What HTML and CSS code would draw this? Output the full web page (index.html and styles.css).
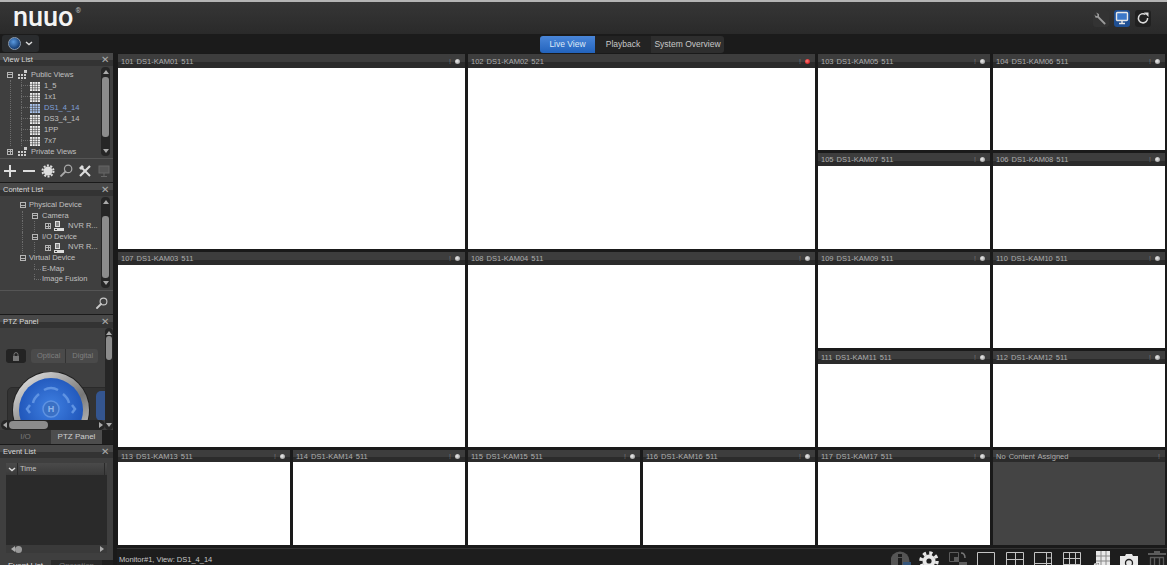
FILE: index.html
```html
<!DOCTYPE html>
<html lang="en">
<head>
<meta charset="utf-8">
<title>NUUO</title>
<link rel="stylesheet" href="styles.css">
</head>
<body>
<svg class="defs" width="0" height="0">
  <symbol id="grid" viewBox="0 0 10 10"><path fill="currentColor" d="M0 1h10v9H0z"/><path stroke="#444" stroke-width=".6" d="M0 3.300h10M0 5.600h10M0 7.800h10M2.500 1v9M5 1v9M7.500 1v9"/></symbol>
  <symbol id="views" viewBox="0 0 10 10"><path fill="#ccc" d="M0 4h2v2H0zM3 4h2v2H3zM0 7h2v2H0zM3 7h2v2H3zM6 7h2v2H6zM6 4h2v2H6zM6 0h3v3H6z"/></symbol>
  <symbol id="nvr" viewBox="0 0 10 10"><path fill="#ddd" d="M1 0h5v6H1zM0 7h10v3H0z"/><path fill="#333" d="M2 1.500h3v1H2zM2 3.500h3v1H2zM1 8h2v1H1z"/></symbol>
  <symbol id="mag" viewBox="0 0 12 12"><circle cx="7.500" cy="4.500" r="3.400" fill="none" stroke="currentColor" stroke-width="1.100"/><path d="M5 7 1 11" stroke="currentColor" stroke-width="1.800" stroke-linecap="round"/></symbol>
</svg>
<div class="app">
  <header class="topbar">
    <div class="logo">nuuo<sup>®</sup></div>
    <div class="top-actions">
      <span class="top-btn"><svg viewBox="0 0 14 14" width="14" height="14"><path fill="#9a9a9a" d="M2 1.500 5 3v2.400L11.500 12a1 1 0 0 1-1.500 1.200L3.600 6.700H1.600L.4 3.600 2 5h1.400V3.400Z"/></svg></span>
      <span class="top-btn active"><svg viewBox="0 0 14 14" width="14" height="14"><rect x="1.500" y="1.500" width="11" height="8" rx="1" fill="#3b78c9" stroke="#e8e8e8" stroke-width="1.400"/><path stroke="#e8e8e8" stroke-width="1.400" d="M4 12.500h6M7 10v2"/></svg></span>
      <span class="top-btn dark"><svg viewBox="0 0 14 14" width="14" height="14"><path fill="none" stroke="#dcdcdc" stroke-width="1.500" d="M9.500 3.400A4.600 4.600 0 1 0 11.600 7"/><path fill="#dcdcdc" d="M8 1.500h4.500V6l-1.700-1.700L9.700 3.200Z"/></svg></span>
    </div>
  </header>
  <nav class="navbar">
    <div class="globe-btn"><span class="globe"></span><svg viewBox="0 0 8 5" width="8" height="5"><path d="M1 1l3 2.600L7 1" fill="none" stroke="#ddd" stroke-width="1.400"/></svg></div>
    <div class="tabs">
      <span class="tab on">Live View</span><span class="tab">Playback</span><span class="tab raised">System Overview</span>
    </div>
  </nav>
  <div class="body">
    <aside class="side">
      <section class="panel p-view">
        <h2 class="phead">View List<span class="close">✕</span></h2>
        <div class="pbody">
          <div class="tree view-tree">
            <div class="node"><i class="box minus"></i><svg class="ic-views"><use href="#views"/></svg>Public Views</div>
            <ul class="branch">
              <li><svg class="ic-grid"><use href="#grid"/></svg>1_5</li>
              <li><svg class="ic-grid"><use href="#grid"/></svg>1x1</li>
              <li class="sel"><svg class="ic-grid"><use href="#grid"/></svg>DS1_4_14</li>
              <li><svg class="ic-grid"><use href="#grid"/></svg>DS3_4_14</li>
              <li><svg class="ic-grid"><use href="#grid"/></svg>1PP</li>
              <li><svg class="ic-grid"><use href="#grid"/></svg>7x7</li>
            </ul>
            <div class="node"><i class="box plus"></i><svg class="ic-views"><use href="#views"/></svg>Private Views</div>
          </div>
          <div class="vscroll"><b class="arrow up"></b><span class="track"><span class="thumb t-view"></span></span><b class="arrow down"></b></div>
        </div>
        <div class="ptools">
          <svg viewBox="0 0 14 14" width="14" height="14"><path d="M7 1v12M1 7h12" stroke="#ddd" stroke-width="2"/></svg>
          <svg viewBox="0 0 14 14" width="14" height="14"><path d="M1 7h12" stroke="#ddd" stroke-width="2"/></svg>
          <svg viewBox="0 0 14 14" width="14" height="14"><circle cx="7" cy="7" r="4.500" fill="#ddd"/><circle cx="7" cy="7" r="5.500" fill="none" stroke="#ddd" stroke-width="2" stroke-dasharray="2 1.450"/></svg>
          <svg class="t-mag" width="13" height="13"><use href="#mag"/></svg>
          <svg viewBox="0 0 14 14" width="14" height="14"><path d="M3 3l9 9" stroke="#ddd" stroke-width="2"/><path d="M12 2 2 12" stroke="#ddd" stroke-width="2.200"/><path d="M1 4l3-3 2 2-3 3z" fill="#ddd"/></svg>
          <svg viewBox="0 0 14 14" width="14" height="14"><rect x="2" y="2" width="10" height="7" fill="#555" stroke="#666"/><path d="M7 9v3M4 12.500h6" stroke="#666"/></svg>
        </div>
      </section>
      <section class="panel p-content">
        <h2 class="phead">Content List<span class="close">✕</span></h2>
        <div class="pbody">
          <div class="tree content-tree">
            <div class="cnode l0"><i class="box minus"></i>Physical Device</div>
            <div class="cnode l1"><i class="box minus"></i>Camera</div>
            <div class="cnode l2"><i class="box plus"></i><svg class="ic-nvr"><use href="#nvr"/></svg>NVR R...</div>
            <div class="cnode l1"><i class="box minus"></i>I/O Device</div>
            <div class="cnode l2"><i class="box plus"></i><svg class="ic-nvr"><use href="#nvr"/></svg>NVR R...</div>
            <div class="cnode l0"><i class="box minus"></i>Virtual Device</div>
            <div class="cnode leaf">E-Map</div>
            <div class="cnode leaf">Image Fusion</div>
          </div>
          <div class="vscroll"><b class="arrow up"></b><span class="track"><span class="thumb t-content"></span></span><b class="arrow down"></b></div>
        </div>
        <div class="psearch"><svg width="12" height="12"><use href="#mag"/></svg></div>
      </section>
      <section class="panel p-ptz">
        <h2 class="phead">PTZ Panel<span class="close">✕</span></h2>
        <div class="ptz-body">
          <div class="ptz-view">
            <div class="ptz-top">
              <span class="lock"><svg viewBox="0 0 8 9" width="8" height="9"><path d="M2 4V2.600a2 2 0 0 1 4 0V4" fill="none" stroke="#777"/><path d="M1 4h6v5H1z" fill="#777"/></svg></span>
              <span class="seg"><span>Optical</span><span>Digital</span></span>
            </div>
            <div class="ptz-pad">
              <div class="dial"><div class="dial-in">
                <svg class="dial-arcs" viewBox="0 0 64 64"><g fill="none" stroke="#5f93e2" stroke-width="2.500"><path d="M25 12q7-4 14 0"/><path d="M44 16q5 4 6 9"/><path d="M20 16q-5 4-6 9"/><path d="M11 32l-3 4 3 4M53 32l3 4-3 4" transform="translate(0 -5)"/></g><circle cx="32" cy="31" r="8" fill="#3a70c4" stroke="#5f93e2" stroke-width="1.500"/></svg>
                <span class="h">H</span>
              </div></div>
              <span class="zoomer"></span>
            </div>
            <div class="hscroll"><b class="arrow left"></b><span class="htrack"><span class="hthumb"></span></span><b class="arrow right"></b></div>
          </div>
          <div class="vscroll narrow"><b class="arrow up"></b><span class="track"><span class="thumb t-ptz"></span></span><b class="arrow down"></b></div>
        </div>
        <div class="ptabs"><span class="ptab">I/O</span><span class="ptab on">PTZ Panel</span></div>
      </section>
      <section class="panel p-event">
        <h2 class="phead">Event List<span class="close">✕</span></h2>
        <div class="event-wrap">
          <div class="etable">
            <div class="ehead"><span class="echev"><svg viewBox="0 0 8 5" width="8" height="5"><path d="M1 1l3 2.600L7 1" fill="none" stroke="#ddd" stroke-width="1.400"/></svg></span><span class="etime">Time</span></div>
            <div class="ebody"></div>
            <div class="ehscroll"><b class="arrow left"></b><span class="edot"></span><span class="espace"></span><b class="arrow right"></b></div>
          </div>
        </div>
        <div class="etabs"><span class="etab on">Event List</span><span class="etab">Operation</span></div>
      </section>
    </aside>
    <div class="content">
      <main class="wall">
        <article class="cell big"><div class="ctitle"><span>101 DS1-KAM01 511</span><span class="flags"><em>!</em><u></u></span></div><div class="video"></div></article>
        <article class="cell big"><div class="ctitle"><span>102 DS1-KAM02 521</span><span class="flags"><em>!</em><u class="rec"></u></span></div><div class="video"></div></article>
        <article class="cell"><div class="ctitle"><span>103 DS1-KAM05 511</span><span class="flags"><em>!</em><u></u></span></div><div class="video"></div></article>
        <article class="cell"><div class="ctitle"><span>104 DS1-KAM06 511</span><span class="flags"><em>!</em><u></u></span></div><div class="video"></div></article>
        <article class="cell"><div class="ctitle"><span>105 DS1-KAM07 511</span><span class="flags"><em>!</em><u></u></span></div><div class="video"></div></article>
        <article class="cell"><div class="ctitle"><span>106 DS1-KAM08 511</span><span class="flags"><em>!</em><u></u></span></div><div class="video"></div></article>
        <article class="cell big"><div class="ctitle"><span>107 DS1-KAM03 511</span><span class="flags"><em>!</em><u></u></span></div><div class="video"></div></article>
        <article class="cell big"><div class="ctitle"><span>108 DS1-KAM04 511</span><span class="flags"><em>!</em><u></u></span></div><div class="video"></div></article>
        <article class="cell"><div class="ctitle"><span>109 DS1-KAM09 511</span><span class="flags"><em>!</em><u></u></span></div><div class="video"></div></article>
        <article class="cell"><div class="ctitle"><span>110 DS1-KAM10 511</span><span class="flags"><em>!</em><u></u></span></div><div class="video"></div></article>
        <article class="cell"><div class="ctitle"><span>111 DS1-KAM11 511</span><span class="flags"><em>!</em><u></u></span></div><div class="video"></div></article>
        <article class="cell"><div class="ctitle"><span>112 DS1-KAM12 511</span><span class="flags"><em>!</em><u></u></span></div><div class="video"></div></article>
        <article class="cell low"><div class="ctitle"><span>113 DS1-KAM13 511</span><span class="flags"><em>!</em><u></u></span></div><div class="video"></div></article>
        <article class="cell low"><div class="ctitle"><span>114 DS1-KAM14 511</span><span class="flags"><em>!</em><u></u></span></div><div class="video"></div></article>
        <article class="cell low"><div class="ctitle"><span>115 DS1-KAM15 511</span><span class="flags"><em>!</em><u></u></span></div><div class="video"></div></article>
        <article class="cell low"><div class="ctitle"><span>116 DS1-KAM16 511</span><span class="flags"><em>!</em><u></u></span></div><div class="video"></div></article>
        <article class="cell low"><div class="ctitle"><span>117 DS1-KAM17 511</span><span class="flags"><em>!</em><u></u></span></div><div class="video"></div></article>
        <article class="cell low empty"><div class="ctitle"><span>No Content Assigned</span><span class="flags"><em>!</em></span></div><div class="video"></div></article>
      </main>
      <footer class="status">
        <span class="status-text">Monitor#1, View: DS1_4_14</span>
        <div class="status-icons">
          <svg viewBox="0 0 20 20" width="20" height="20"><circle cx="9" cy="10" r="9.500" fill="#555"/><rect x="7" y="3" width="4" height="3" fill="#1d1d1d"/><rect x="7" y="7" width="4" height="9" fill="#1d1d1d"/><rect x="12" y="11" width="8" height="9" fill="#35557a"/></svg>
          <svg viewBox="0 0 20 20" width="20" height="20"><circle cx="10" cy="10" r="6.500" fill="#e6e6e6"/><circle cx="10" cy="10" r="8" fill="none" stroke="#e6e6e6" stroke-width="3.500" stroke-dasharray="3.200 3.080"/><circle cx="10" cy="10" r="2.600" fill="#1d1d1d"/></svg>
          <svg viewBox="0 0 20 20" width="20" height="20"><path fill="none" stroke="#5c5c5c" d="M1.500 1.500h9v9h-9z"/><path fill="#5c5c5c" d="M6 6h5v5H6zM11 11h8v9h-8z"/><path fill="none" stroke="#777" stroke-width="1.500" d="M13 2c3 0 4 2 4 5"/></svg>
          <svg viewBox="0 0 20 20" width="20" height="20"><path fill="none" stroke="#c4c4c4" d="M1.500 1.500h17v17h-17z"/></svg>
          <svg viewBox="0 0 20 20" width="20" height="20"><path fill="none" stroke="#c4c4c4" d="M1.500 1.500h17v17h-17zM1.500 8.500h17M10.500 1.500v17"/></svg>
          <svg viewBox="0 0 20 20" width="20" height="20"><path fill="none" stroke="#c4c4c4" d="M1.500 1.500h17v17h-17zM1.500 12.500h17M13.500 1.500v17M13.500 7h5"/></svg>
          <svg viewBox="0 0 20 20" width="20" height="20"><path fill="none" stroke="#c4c4c4" d="M1.500 1.500h17v17h-17zM1.500 7.500h17M1.500 13.500h17M7.500 1.500v17M13.500 1.500v17"/></svg>
          <svg viewBox="0 0 20 20" width="20" height="20"><path fill="#e8e8e8" d="M6 0h14v20H6z"/><path stroke="#888" d="M6 5h14M6 10h14M6 15h14M11 0v20M16 0v20"/><path fill="#1d1d1d" d="M0 12h9v8H0z"/><path fill="none" stroke="#e8e8e8" stroke-width="1.500" d="M1 20v-5h3l1-2h3v7"/></svg>
          <svg viewBox="0 0 20 20" width="20" height="20"><path fill="#e8e8e8" d="M1 5h5l1-2h6l1 2h5v15H1z"/><circle cx="10" cy="12" r="3.500" fill="#e8e8e8" stroke="#1d1d1d" stroke-width="1.300"/></svg>
          <svg viewBox="0 0 20 20" width="20" height="20"><path fill="#5c5c5c" d="M7 0h6v2h6v2H1V2h6z"/><path fill="none" stroke="#5c5c5c" stroke-width="1.300" d="M3.500 6v14M7.500 6v14M12.500 6v14M16.500 6v14M3 6.500h14"/></svg>
        </div>
      </footer>
    </div>
  </div>
</div>
</body>
</html>
```
FILE: styles.css
```css
* { box-sizing: border-box; }
html, body { margin: 0; height: 565px; overflow: hidden; background: #1a1a1a; }
body { font-family: "Liberation Sans", Arial, sans-serif; font-size: 7.500px; color: #c0c0c0; }
.defs { display: block; height: 0; }
.app { width: 1167px; height: 565px; display: flex; flex-direction: column; overflow: hidden; }

/* Top */
.topbar { height: 34px; flex: none; display: flex; justify-content: space-between; align-items: center; border-top: 2px solid #b5b5b5; padding: 0 16px 0 13px; background: linear-gradient(#363636, #2a2a2a); }
.logo { font-family: Roboto, "DejaVu Sans", sans-serif; font-weight: 500; font-size: 27px; line-height: 30px; color: #f4f4f4; display: flex; margin-top: -3px; }
.logo sup { font-size: 7px; line-height: 18px; font-weight: 400; color: #bbb; margin-left: 2px; }
.top-actions { display: flex; gap: 5px; }
.top-btn { width: 16px; height: 17px; border-radius: 3px; display: flex; align-items: center; justify-content: center; background: #333; }
.top-btn.active { background: #1f4f92; }
.top-btn.dark { background: #202020; }
.navbar { height: 19px; flex: none; position: relative; display: flex; align-items: center; justify-content: center; background: #1b1b1b; }
.globe-btn { position: absolute; left: 2px; top: 1px; width: 37px; height: 17px; display: flex; align-items: center; justify-content: center; gap: 4px; border-radius: 3px; background: #2a2c2e; }
.globe { width: 13px; height: 13px; border-radius: 50%; background: radial-gradient(circle at 40% 35%, #5a9ae0, #12386e 75%); border: 1px solid #8a9bb0; }
.tabs { display: flex; height: 17px; margin-top: 1px; margin-left: 97px; }
.tab { width: 56px; font-size: 8.500px; line-height: 17px; text-align: center; color: #c8c8c8; background: #232323; white-space: nowrap; }
.tab.on { width: 55px; color: #dfe9f7; background: linear-gradient(#4a86d8, #2263bd); border-radius: 3px 0 0 3px; }
.tab.raised { width: 73px; background: #2e2e2e; border-radius: 0 3px 3px 0; }

/* Body */
.body { flex: 1; min-height: 0; display: flex; }
.side { width: 117px; flex: none; display: flex; flex-direction: column; background: #1a1a1a; border-right: 4px solid #1a1a1a; }
.panel { flex: none; background: #3f3f3f; overflow: hidden; }
.p-view { height: 129px; }
.p-content { height: 131px; margin-top: 1px; }
.p-ptz { height: 129px; margin-top: 1px; }
.p-event { flex: 1; margin-top: 1px; }
.phead { margin: 0; height: 13px; font-size: 7.500px; font-weight: 400; line-height: 13px; padding: 0 3px; color: #d8d8d8; display: flex; justify-content: space-between; background: linear-gradient(#484848 55%, #333 55%); }
.close { font-size: 9.500px; color: #aaa; margin-right: 1px; }
.pbody { display: flex; height: 92px; }
.p-content .pbody { height: 94px; }
.tree { flex: 1; min-width: 0; line-height: 11px; color: #c0c0c0; white-space: nowrap; }
.view-tree { padding: 3px 0 0 7px; }
.node { height: 11px; display: flex; align-items: center; }
.box { flex: none; width: 6px; height: 6px; border: 1px solid #b5b5b5; position: relative; display: inline-block; }
.box::before { content: ""; position: absolute; left: 0; right: 0; top: 1.500px; height: 1px; background: #b5b5b5; }
.box.plus::after { content: ""; position: absolute; top: 0; bottom: 0; left: 1.500px; width: 1px; background: #b5b5b5; }
.ic-views { width: 10px; height: 10px; margin: 0 3px 0 5px; flex: none; }
.branch { list-style: none; margin: 0 0 0 3px; padding: 0; border-left: 1px dotted #6c6c6c; }
.branch li { height: 11px; display: flex; align-items: center; padding-left: 19px; position: relative; }
.branch li::before { content: ""; position: absolute; left: 10px; top: 5px; width: 9px; border-top: 1px dotted #6c6c6c; }
.branch li::after { content: ""; position: absolute; left: 10px; top: 0; height: 100%; border-left: 1px dotted #6c6c6c; }
.branch li.sel { color: #7f9fd8; }
.ic-grid { width: 10px; height: 10px; margin-right: 4px; color: #eee; flex: none; }
.sel .ic-grid { color: #a9c4ee; }
.content-tree { padding-top: 4px; line-height: 10.600px; }
.cnode { height: 10.600px; display: flex; align-items: center; position: relative; }
.cnode .box { width: 6px; height: 6px; }
.cnode.l0 { padding-left: 20px; }
.cnode.l0 .box { margin-right: 3px; }
.cnode.l1 { padding-left: 32px; }
.cnode.l1 .box { margin-right: 4px; }
.cnode.l2 { padding-left: 45px; }
.cnode.l2 .box { margin-right: 3px; }
.cnode.leaf { padding-left: 42px; }
.cnode.l1::before, .cnode.l2::before { content: ""; position: absolute; left: 22px; top: 0; height: 100%; border-left: 1px dotted #6c6c6c; }
.cnode.l2::after { content: ""; position: absolute; left: 34px; top: 0; height: 100%; border-left: 1px dotted #6c6c6c; }
.cnode.leaf::before { content: ""; position: absolute; left: 34px; top: 5px; width: 7px; border-top: 1px dotted #6c6c6c; }
.cnode.leaf::after { content: ""; position: absolute; left: 34px; top: 0; height: 5px; border-left: 1px dotted #6c6c6c; }
.ic-nvr { width: 10px; height: 10px; margin-right: 4px; flex: none; }
.vscroll { width: 9px; flex: none; margin: 1px 3px 2px 0; display: flex; flex-direction: column; background: #262626; border-radius: 4px; align-items: center; }
.vscroll.narrow { width: 8px; margin: 0; }
.arrow { flex: none; width: 0; height: 0; border: 3px solid transparent; }
.arrow.up { border-bottom: 4px solid #aaa; border-top: 0; margin-top: 3px; }
.arrow.down { border-top: 4px solid #aaa; border-bottom: 0; margin-bottom: 3px; }
.arrow.left { border-right: 4px solid #aaa; border-left: 0; margin-left: 2px; }
.arrow.right { border-left: 4px solid #aaa; border-right: 0; margin-right: 2px; }
.track { flex: 1; width: 100%; padding: 0 1px; display: flex; flex-direction: column; }
.thumb { display: block; background: #8c8c8c; border-radius: 3px; }
.t-view { margin-top: 3px; height: 60px; }
.t-content { margin-top: 12px; height: 62px; }
.t-ptz { margin-top: 1px; height: 24px; }
.ptools { height: 24px; border-top: 1px solid #555; display: flex; align-items: center; gap: 5px; padding: 0 0 0 3px; }
.t-mag { color: #aaa; }
.psearch { height: 24px; border-top: 1px solid #555; display: flex; justify-content: flex-end; align-items: center; padding-right: 5px; color: #c8c8c8; }

/* PTZ */
.ptz-body { display: flex; height: 102px; background: #3f3f3f; }
.ptz-view { width: 105px; flex: none; display: flex; flex-direction: column; }
.ptz-top { height: 44px; padding-top: 21px; flex: none; display: flex; align-items: flex-start; padding-left: 6px; gap: 5px; }
.lock { width: 20px; height: 14px; border-radius: 3px; display: flex; align-items: center; justify-content: center; background: #232323; }
.seg { display: flex; height: 14px; background: #4a4a4a; border-radius: 3px; font-size: 7.500px; line-height: 14px; color: #7f7f7f; }
.seg span { padding: 0 5px 0 6px; }
.seg span + span { border-left: 1px solid #333; }
.ptz-pad { flex: 1; min-height: 0; position: relative; overflow: hidden; }
.ptz-pad::before { content: ""; position: absolute; left: 7px; right: -5px; top: 15px; bottom: -5px; border-radius: 5px 0 0 0; background: #333; border: 1px solid #2a2a2a; }
.dial { position: absolute; left: 13px; top: 0; width: 76px; height: 76px; border-radius: 50%; background: linear-gradient(145deg, #f0f0f0, #777 55%, #e4e4e4); padding: 6px; box-shadow: 0 0 0 1px #222; }
.dial-in { position: relative; width: 100%; height: 100%; border-radius: 50%; background: radial-gradient(circle at 50% 45%, #3f80e2, #1c50b4 80%); display: flex; justify-content: center; padding-top: 24px; }
.dial-arcs { position: absolute; left: 0; top: 0; width: 100%; height: 100%; }
.h { position: relative; color: #8fb4ea; font-weight: 700; font-size: 9px; line-height: 15px; }
.zoomer { position: absolute; right: 0; top: 19px; width: 9px; height: 30px; border-radius: 5px 0 0 5px; background: #34558f; }
.hscroll { height: 10px; flex: none; position: relative; display: flex; align-items: center; background: #262626; border-radius: 5px; margin-left: 1px; }
.htrack { flex: 1; height: 100%; padding: 1px 2px; }
.hthumb { display: block; width: 39px; height: 8px; background: #8c8c8c; border-radius: 4px; }
.ptabs { height: 14px; display: flex; background: #1f1f1f; }
.ptab { width: 51px; text-align: center; font-size: 8px; line-height: 13px; color: #777; background: #363636; }
.ptab.on { color: #cfcfcf; background: #4d4d4d; }

/* Event */
.event-wrap { height: 102px; padding: 5px 6px 0; }
.etable { height: 90px; display: flex; flex-direction: column; background: #2a2a2a; }
.ehead { height: 12px; flex: none; display: flex; background: linear-gradient(#4a4a4a, #3a3a3a); font-size: 7.500px; line-height: 12px; }
.echev { width: 12px; display: flex; align-items: center; justify-content: center; border-right: 1px solid #2a2a2a; }
.etime { flex: 1; padding-left: 2px; border-right: 1px solid #2a2a2a; margin-right: 2px; }
.ebody { flex: 1; }
.ehscroll { height: 8px; flex: none; display: flex; align-items: center; background: #3a3a3a; padding: 0 1px 0 3px; }
.edot { width: 7px; height: 7px; border-radius: 50%; background: #999; }
.espace { flex: 1; }
.etabs { display: flex; height: 12px; background: #1f1f1f; }
.etab { width: 51px; line-height: 12px; font-size: 8px; text-align: center; color: #777; background: #2a2a2a; }
.etab.on { color: #ddd; background: #3f3f3f; }

/* Wall */
.content { flex: 1; min-width: 0; display: flex; flex-direction: column; }
.wall { display: grid; grid-template-columns: repeat(6, 175px); grid-auto-rows: 99px; height: 495px; flex: none; background: #1a1a1a; margin-top: 1px; margin-bottom: -1px; }
.cell { display: flex; flex-direction: column; padding: 0 2px 3px 1px; min-height: 0; }
.cell.big { grid-column: span 2; grid-row: span 2; }
.cell.low { padding-bottom: 4px; }
.ctitle { height: 13px; flex: none; display: flex; justify-content: space-between; align-items: center; padding: 0 5px 0 3px; font-size: 7.500px; word-spacing: 1px; color: #aeaeae; white-space: nowrap; background: linear-gradient(#3d3d3d 60%, #2b2b2b 60%); }
.cell:nth-child(-n+4) .ctitle { height: 14px; }
.cell.low .ctitle { height: 12px; }
.flags { display: flex; align-items: center; gap: 4px; }
.flags em { font-style: normal; color: #777; font-size: 7px; }
.flags u { display: block; width: 5px; height: 5px; border-radius: 50%; background: radial-gradient(circle at 40% 40%, #eee, #888); }
.flags u.rec { background: radial-gradient(circle at 40% 40%, #ff7a7a, #c10000); }
.video { flex: 1; background: #fff; }
.empty .video { background: #444; }
.status { flex: 1; min-height: 0; display: flex; justify-content: space-between; align-items: flex-start; background: #1d1d1d; padding-left: 2px; border-top: 1px solid #333; }
.status-text { font-size: 7.500px; line-height: 22px; color: #c8c8c8; }
.status-icons { display: flex; gap: 8.500px; padding: 2px 0 0 0; }
```
